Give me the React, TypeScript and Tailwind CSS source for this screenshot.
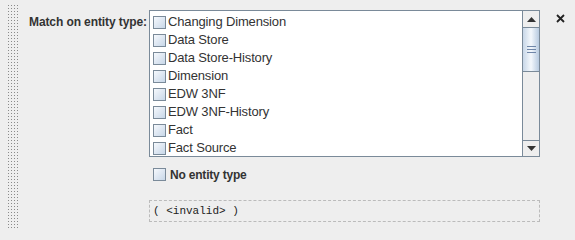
import React from 'react';

const TYPES = [
    'Changing Dimension',
    'Data Store',
    'Data Store-History',
    'Dimension',
    'EDW 3NF',
    'EDW 3NF-History',
    'Fact',
    'Fact Source',
];

const Box: React.FC = () => (
    <span className="inline-block w-[13px] h-[13px] shrink-0 border border-[#7a8a99] bg-gradient-to-br from-[#f6f9fd] to-[#c8d7e8]" />
);

const App: React.FC = () => {
    return (
        <div className="w-[575px] h-[240px] bg-[#eeeeee] flex font-['Liberation_Sans',Arial,sans-serif] text-[#333333] overflow-hidden">
            {/* grip strip */}
            <div className="ml-[7px] mt-[4px] w-[12px] h-[226px] bg-[radial-gradient(circle,#8a8a8a_0.7px,transparent_0.9px)] bg-[length:3px_3px]" />

            {/* label */}
            <div className="ml-[10px] pt-[13px] w-[120px] text-[12px] font-bold text-[#333333] tracking-[-0.1px]">
                Match on entity type:
            </div>

            {/* content */}
            <div className="pt-[10px] w-[391px]">
                <div className="h-[147px] border border-[#7a8a99] bg-white flex">
                    <div className="flex-1 pt-[2px] pl-[3px]">
                        {TYPES.map(t => (
                            <div key={t} className="h-[18px] flex items-center gap-[2px] text-[13px] text-[#333333] tracking-[-0.15px]">
                                <Box />
                                <span>{t}</span>
                            </div>
                        ))}
                    </div>
                    <div className="w-[17px] border-l border-[#7a8a99] bg-[#eeeeee] flex flex-col">
                        <div className="h-[17px] flex items-center justify-center border-b border-[#7a8a99]">
                            <svg width="9" height="5" viewBox="0 0 9 5"><path d="M0 5 L4.5 0 L9 5 Z" fill="#333" /></svg>
                        </div>
                        <div className="h-[44px] border-b border-[#7a8a99] bg-gradient-to-r from-[#c8d7e8] via-[#f4f8fc] to-[#b8cbe0] flex items-center justify-center">
                            <div className="flex flex-col gap-[2px]">
                                <span className="block w-[9px] h-[1px] bg-[#6f86a8]" />
                                <span className="block w-[9px] h-[1px] bg-[#6f86a8]" />
                                <span className="block w-[9px] h-[1px] bg-[#6f86a8]" />
                            </div>
                        </div>
                        <div className="flex-1" />
                        <div className="h-[16px] flex items-center justify-center border-t border-[#7a8a99]">
                            <svg width="9" height="5" viewBox="0 0 9 5"><path d="M0 0 L9 0 L4.5 5 Z" fill="#333" /></svg>
                        </div>
                    </div>
                </div>

                <div className="mt-[10px] ml-[4px] h-[15px] flex items-center gap-[4px] text-[12px] font-bold text-[#333333] tracking-[-0.2px]">
                    <Box />
                    <span>No entity type</span>
                </div>

                <div className="mt-[18px] h-[22px] border border-dashed border-[#bbbbbb] flex items-center pl-[3px] font-['Liberation_Mono',monospace] text-[11px] text-[#222222]">
                    ( &lt;invalid&gt; )
                </div>
            </div>

            {/* close */}
            <div className="ml-[16px] pt-[14px]">
                <svg width="9" height="9" viewBox="0 0 9 9">
                    <path d="M1 1 L8 8 M8 1 L1 8" stroke="#222" strokeWidth="1.8" />
                </svg>
            </div>
        </div>
    );
};

export default App;
